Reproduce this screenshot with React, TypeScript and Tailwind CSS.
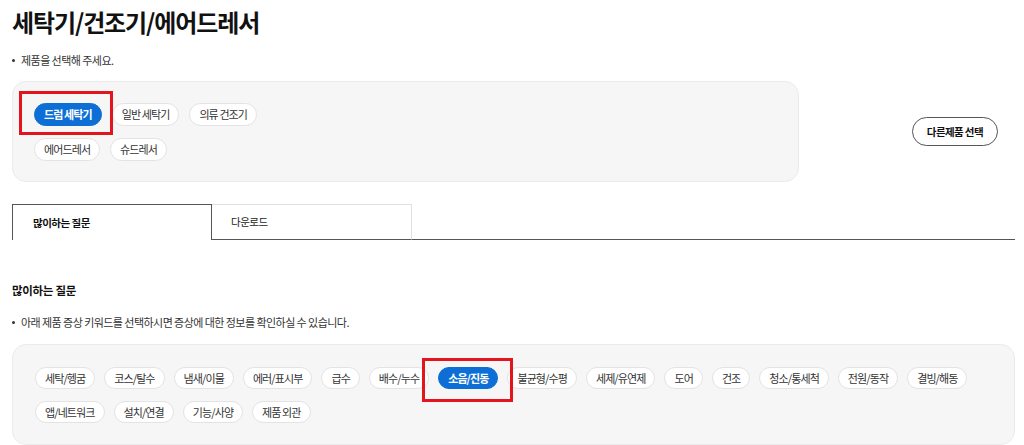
import React, { useState } from "react";

type Chip = { label: string; highlight?: boolean };

const products: Chip[][] = [
  [{ label: "드럼 세탁기", highlight: true }, { label: "일반 세탁기" }, { label: "의류 건조기" }],
  [{ label: "에어드레서" }, { label: "슈드레서" }],
];

const symptoms: string[] = [
  "세탁/헹굼",
  "코스/탈수",
  "냄새/이물",
  "에러/표시부",
  "급수",
  "배수/누수",
  "소음/진동",
  "불균형/수평",
  "세제/유연제",
  "도어",
  "건조",
  "청소/통세척",
  "전원/동작",
  "결빙/해동",
  "앱/네트워크",
  "설치/연결",
  "기능/사양",
  "제품 외관",
];

function Pill({
  label,
  active,
  height,
  onClick,
}: {
  label: string;
  active?: boolean;
  height: string;
  onClick?: () => void;
}) {
  return (
    <button
      onClick={onClick}
      className={`${height} flex items-center rounded-full border px-[9px] text-[11px] tracking-[-0.9px] whitespace-nowrap ${
        active
          ? "border-[#0d6fd6] bg-[#0d6fd6] font-bold text-white"
          : "border-[#e3e3e3] bg-white text-[#333]"
      }`}
    >
      {label}
    </button>
  );
}

function Bullet({ children }: { children: React.ReactNode }) {
  return (
    <p className="flex items-center leading-[16px] text-[11px] tracking-[-0.55px] text-[#333]">
      <span className="mr-[6px] h-[3px] w-[3px] rounded-full bg-[#333]" />
      {children}
    </p>
  );
}

export default function App() {
  const [tab, setTab] = useState(0);
  const [product, setProduct] = useState("드럼 세탁기");
  const [symptom, setSymptom] = useState("소음/진동");

  return (
    <div className="h-[445px] w-[1024px] overflow-hidden bg-white pl-3 pr-[9px] font-['Noto_Sans_CJK_KR','Noto_Sans',sans-serif] text-[#111]">
      <h1 className="pt-[4px] text-[24px] leading-[36px] font-bold tracking-[-1.1px]">
        세탁기/건조기/에어드레서
      </h1>

      <div className="mt-[12px]">
        <Bullet>제품을 선택해 주세요.</Bullet>
      </div>

      {/* product picker */}
      <div className="mt-[13px] flex items-center">
        <div className="flex h-[101px] w-[787px] flex-col gap-y-[12px] rounded-[14px] border border-[#ebebeb] bg-[#f6f6f6] pt-[21px] pl-[21px]">
          {products.map((row, i) => (
            <div key={i} className="flex gap-x-[10px]">
              {row.map((p) => (
                <div key={p.label} className="relative">
                  <Pill
                    label={p.label}
                    height="h-[23px]"
                    active={product === p.label}
                    onClick={() => setProduct(p.label)}
                  />
                  {p.highlight && (
                    <span className="pointer-events-none absolute -top-[12px] -right-[11px] -bottom-[9px] -left-[15px] z-10 border-[3px] border-[#e3141b]" />
                  )}
                </div>
              ))}
            </div>
          ))}
        </div>
        <button className="mr-[17px] ml-auto h-[29px] rounded-full border-[1.5px] border-[#555] px-[14px] text-[10.5px] font-bold tracking-[-0.6px] text-[#111]">
          다른제품 선택
        </button>
      </div>

      {/* tabs */}
      <div className="mt-[22px] flex h-[36px]">
        <button
          onClick={() => setTab(0)}
          className="flex w-[200px] items-center border-t border-r border-l border-[#555] pl-[20px] text-[10.5px] font-bold tracking-[-0.5px]"
        >
          많이하는 질문
        </button>
        <button
          onClick={() => setTab(1)}
          className="flex w-[200px] items-center border-t border-r border-b border-t-[#e0e0e0] border-r-[#e0e0e0] border-b-[#555] pl-[19px] text-[10.5px] tracking-[-0.5px] text-[#222]"
        >
          다운로드
        </button>
        <div className="flex-1 border-b border-[#555]" />
      </div>

      {tab === 0 && (
        <>
          <h2 className="mt-[41px] text-[11.5px] leading-[18px] font-bold tracking-[-0.3px]">
            많이하는 질문
          </h2>
          <div className="mt-[15px]">
            <Bullet>아래 제품 증상 키워드를 선택하시면 증상에 대한 정보를 확인하실 수 있습니다.</Bullet>
          </div>

          {/* symptom keywords */}
          <div className="mt-[14px] flex h-[101px] flex-wrap content-start gap-x-[9px] gap-y-[12px] rounded-[14px] border border-[#ebebeb] bg-[#f6f6f6] pt-[22px] pr-[21px] pl-[22px]">
            {symptoms.map((s) => (
              <div key={s} className="relative">
                <Pill
                  label={s}
                  height="h-[22px]"
                  active={symptom === s}
                  onClick={() => setSymptom(s)}
                />
                {s === "소음/진동" && (
                  <span className="pointer-events-none absolute -top-[9px] -right-[15px] -bottom-[13px] -left-[16px] z-10 border-[3px] border-[#e3141b]" />
                )}
              </div>
            ))}
          </div>
        </>
      )}
    </div>
  );
}
